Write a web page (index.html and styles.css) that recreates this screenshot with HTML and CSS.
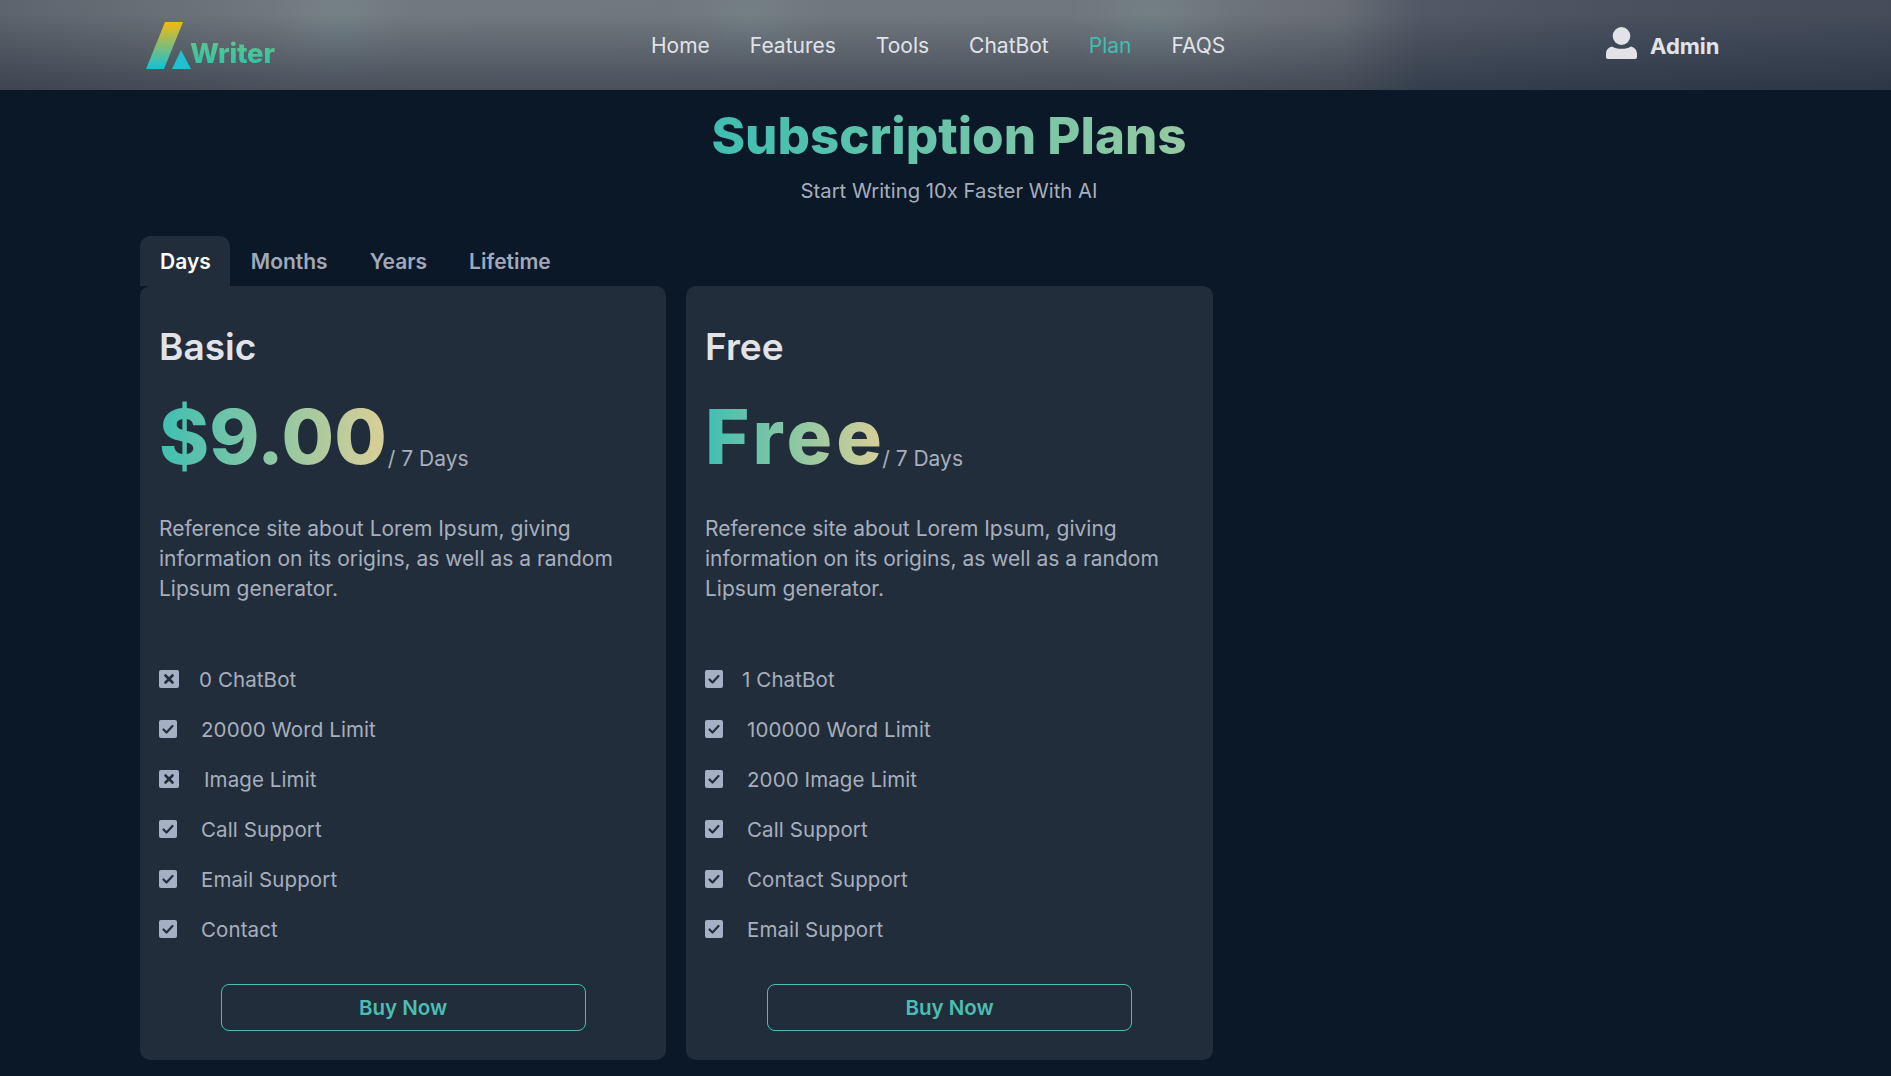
FILE: index.html
```html
<!DOCTYPE html>
<html lang="en">
<head>
  <meta charset="UTF-8" />
  <title>Writer - Subscription Plans</title>
  <link rel="stylesheet" href="styles.css">
</head>
<body>
  <header class="topbar">
    <a class="logo" href="#">
      <svg class="logo-mark" viewBox="0 0 46 48" width="46" height="48">
        <defs>
          <linearGradient id="logoGrad" x1="0" y1="0" x2="0" y2="1">
            <stop offset="0" stop-color="#f5b90f"/>
            <stop offset="1" stop-color="#12c2d6"/>
          </linearGradient>
        </defs>
        <polygon points="19,0 37,0 18,47 0,47" fill="url(#logoGrad)"/>
        <polygon points="35,28 45,47 26,47" fill="#1fc0cf"/>
      </svg>
      <span class="logo-text">Writer</span>
    </a>
    <nav class="main-nav">
      <a href="#">Home</a>
      <a href="#">Features</a>
      <a href="#">Tools</a>
      <a href="#">ChatBot</a>
      <a href="#" class="active">Plan</a>
      <a href="#">FAQS</a>
    </nav>
    <a class="user" href="#">
      <svg viewBox="0 0 31 32" width="31" height="32">
        <ellipse cx="15.5" cy="9" rx="8.8" ry="9" fill="#e2e3e8"/>
        <path d="M6 19.500c2.500 1.500 5.500 2.300 9.500 2.300s7-.8 9.500-2.300c3.500.8 6 3.500 6 7.500v3c0 1.200-.8 2-2 2H2c-1.200 0-2-.8-2-2v-3c0-4 2.500-6.700 6-7.500z" fill="#e2e3e8"/>
      </svg>
      <span>Admin</span>
    </a>
  </header>

  <main class="page">
    <h1 class="page-title"><span>Subscription Plans</span></h1>
    <p class="page-sub">Start Writing 10x Faster With AI</p>

    <div class="tabs">
      <a href="#" class="tab active">Days</a>
      <a href="#" class="tab">Months</a>
      <a href="#" class="tab">Years</a>
      <a href="#" class="tab">Lifetime</a>
    </div>

    <div class="plans">
      <section class="plan">
        <h2>Basic</h2>
        <div class="price"><span class="amount">$9.00</span><span class="period">/ 7 Days</span></div>
        <p class="desc">Reference site about Lorem Ipsum, giving information on its origins, as well as a random Lipsum generator.</p>
        <ul class="features">
          <li class="off">
            <svg class="box" viewBox="0 0 20 18"><rect width="20" height="18" rx="2" fill="#a6b0c4"/><path d="M6.500 5.500l7 7m0-7l-7 7" stroke="#222d3b" stroke-width="2.600" stroke-linecap="round"/></svg>
            <span class="t-zero">0 ChatBot</span>
          </li>
          <li><svg class="box" viewBox="0 0 18 18"><rect width="18" height="18" rx="2" fill="#a6b0c4"/><path d="M4.500 9.500l3 3 6-6.500" fill="none" stroke="#222d3b" stroke-width="2.200" stroke-linecap="round" stroke-linejoin="round"/></svg><span>20000 Word Limit</span></li>
          <li class="off">
            <svg class="box" viewBox="0 0 20 18"><rect width="20" height="18" rx="2" fill="#a6b0c4"/><path d="M6.500 5.500l7 7m0-7l-7 7" stroke="#222d3b" stroke-width="2.600" stroke-linecap="round"/></svg>
            <span class="t-image">Image Limit</span>
          </li>
          <li><svg class="box" viewBox="0 0 18 18"><rect width="18" height="18" rx="2" fill="#a6b0c4"/><path d="M4.500 9.500l3 3 6-6.500" fill="none" stroke="#222d3b" stroke-width="2.200" stroke-linecap="round" stroke-linejoin="round"/></svg><span>Call Support</span></li>
          <li><svg class="box" viewBox="0 0 18 18"><rect width="18" height="18" rx="2" fill="#a6b0c4"/><path d="M4.500 9.500l3 3 6-6.500" fill="none" stroke="#222d3b" stroke-width="2.200" stroke-linecap="round" stroke-linejoin="round"/></svg><span>Email Support</span></li>
          <li><svg class="box" viewBox="0 0 18 18"><rect width="18" height="18" rx="2" fill="#a6b0c4"/><path d="M4.500 9.500l3 3 6-6.500" fill="none" stroke="#222d3b" stroke-width="2.200" stroke-linecap="round" stroke-linejoin="round"/></svg><span>Contact</span></li>
        </ul>
        <a href="#" class="buy">Buy Now</a>
      </section>

      <section class="plan">
        <h2>Free</h2>
        <div class="price"><span class="amount amount-word">Free</span><span class="period">/ 7 Days</span></div>
        <p class="desc">Reference site about Lorem Ipsum, giving information on its origins, as well as a random Lipsum generator.</p>
        <ul class="features">
          <li><svg class="box" viewBox="0 0 18 18"><rect width="18" height="18" rx="2" fill="#a6b0c4"/><path d="M4.500 9.500l3 3 6-6.500" fill="none" stroke="#222d3b" stroke-width="2.200" stroke-linecap="round" stroke-linejoin="round"/></svg><span class="t-one">1 ChatBot</span></li>
          <li><svg class="box" viewBox="0 0 18 18"><rect width="18" height="18" rx="2" fill="#a6b0c4"/><path d="M4.500 9.500l3 3 6-6.500" fill="none" stroke="#222d3b" stroke-width="2.200" stroke-linecap="round" stroke-linejoin="round"/></svg><span>100000 Word Limit</span></li>
          <li><svg class="box" viewBox="0 0 18 18"><rect width="18" height="18" rx="2" fill="#a6b0c4"/><path d="M4.500 9.500l3 3 6-6.500" fill="none" stroke="#222d3b" stroke-width="2.200" stroke-linecap="round" stroke-linejoin="round"/></svg><span>2000 Image Limit</span></li>
          <li><svg class="box" viewBox="0 0 18 18"><rect width="18" height="18" rx="2" fill="#a6b0c4"/><path d="M4.500 9.500l3 3 6-6.500" fill="none" stroke="#222d3b" stroke-width="2.200" stroke-linecap="round" stroke-linejoin="round"/></svg><span>Call Support</span></li>
          <li><svg class="box" viewBox="0 0 18 18"><rect width="18" height="18" rx="2" fill="#a6b0c4"/><path d="M4.500 9.500l3 3 6-6.500" fill="none" stroke="#222d3b" stroke-width="2.200" stroke-linecap="round" stroke-linejoin="round"/></svg><span>Contact Support</span></li>
          <li><svg class="box" viewBox="0 0 18 18"><rect width="18" height="18" rx="2" fill="#a6b0c4"/><path d="M4.500 9.500l3 3 6-6.500" fill="none" stroke="#222d3b" stroke-width="2.200" stroke-linecap="round" stroke-linejoin="round"/></svg><span>Email Support</span></li>
        </ul>
        <a href="#" class="buy">Buy Now</a>
      </section>
    </div>
  </main>
</body>
</html>
```

FILE: styles.css
```css
* {
  box-sizing: border-box;
}

body {
  margin: 0;
  font-family: Inter, "Open Sans", sans-serif;
  background-color: #0b1828;
  color: #a7afbd;
  overflow: hidden;
}

a {
  text-decoration: none;
}

.topbar {
  height: 90px;
  display: grid;
  grid-template-columns: 505px 955px auto;
  align-items: center;
  padding-left: 146px;
  background:
    linear-gradient(to bottom, rgba(11, 24, 40, 0) 15%, rgba(11, 24, 40, 0.42) 100%),
    radial-gradient(ellipse 70px 70px at 340px 20px, rgba(120, 145, 150, 0.35), transparent),
    radial-gradient(ellipse 80px 70px at 750px 20px, rgba(120, 145, 150, 0.3), transparent),
    radial-gradient(ellipse 80px 70px at 1150px 20px, rgba(120, 145, 150, 0.35), transparent),
    linear-gradient(to right, #5e646d 0, #737980 300px, #70767d 1200px, #686d75 1340px, #525966 1420px, #4a5260 1600px, #444c5a 1891px);
}

.logo {
  display: flex;
  align-items: flex-end;
  height: 48px;
  margin-top: 2px;
}

.logo-mark {
  flex: none;
}

.logo-text {
  font-size: 27.500px;
  font-weight: 800;
  line-height: 26px;
  margin-left: -2px;
  letter-spacing: -0.2px;
  background: linear-gradient(to bottom, #5fc58a, #2ec4a8);
  -webkit-background-clip: text;
  background-clip: text;
  color: transparent;
  transform: translateY(-4px);
}

.main-nav {
  display: flex;
  gap: 40px;
}

.main-nav a {
  color: #e2e3e8;
  font-size: 21px;
}

.main-nav a.active {
  color: #43bdb0;
}

.user {
  display: flex;
  align-items: center;
  gap: 13px;
  color: #e2e3e8;
  font-size: 22px;
  font-weight: 700;
}

.user svg {
  margin-bottom: 5px;
}

.user span {
  margin-top: 2px;
}

.page {
  width: 1618px;
  margin-left: 140px;
  padding-top: 14px;
}

.page-title {
  margin: 0;
  text-align: center;
  font-size: 51px;
  line-height: 64px;
  font-weight: 800;
}

.page-title span {
  background: linear-gradient(to right, #3fbfb1, #96c9a2);
  -webkit-background-clip: text;
  background-clip: text;
  color: transparent;
}

.page-sub {
  margin: 8px 0 0;
  text-align: center;
  font-size: 20.300px;
  line-height: 30px;
}

.tabs {
  display: flex;
  margin-top: 30px;
  height: 50px;
}

.tab {
  padding: 0 21px;
  line-height: 52px;
  font-size: 21px;
  font-weight: 600;
  color: #a1a9b9;
}

.tab.active {
  padding: 0 19px 0 20px;
  background: #222d3b;
  color: #fff;
  border-radius: 10px 10px 0 0;
}

.plans {
  display: grid;
  grid-template-columns: 526px 527px;
  gap: 20px;
}

.plan {
  height: 774px;
  padding: 37px 19px 0;
  background: #222d3b;
  border-radius: 10px;
}

.plan h2 {
  margin: 0;
  font-size: 37px;
  line-height: 48px;
  font-weight: 600;
  color: #e2e3e8;
}

.price {
  display: flex;
  align-items: flex-end;
  margin-top: 15px;
}

.amount {
  font-size: 76px;
  line-height: 100px;
  font-weight: 800;
  background: linear-gradient(to right, #3fbfb1, #dccf96);
  -webkit-background-clip: text;
  background-clip: text;
  color: transparent;
}

.amount-word {
  letter-spacing: 4.200px;
  margin-right: -5px;
}

.period {
  font-size: 21px;
  line-height: 30px;
  margin: 0 0 12px 1px;
}

.desc {
  margin: 28px 0 0;
  font-size: 21px;
  line-height: 30px;
}

.features {
  list-style: none;
  margin: 50px 0 0;
  padding: 0;
  font-size: 20.500px;
  letter-spacing: 0.1px;
}

.features li {
  display: flex;
  align-items: center;
  height: 50px;
}

.box {
  width: 18px;
  height: 18px;
  flex: none;
  margin-right: 24px;
}

.off .box {
  width: 20px;
  margin-right: 20px;
}

.off .t-image {
  margin-left: 5px;
}

.t-one {
  margin-left: -5px;
}

.buy {
  display: block;
  width: 365px;
  height: 47px;
  margin: 30px auto 0;
  border: 1px solid #4dbdb2;
  border-radius: 8px;
  text-align: center;
  line-height: 45px;
  font-size: 20.500px;
  font-weight: 600;
  color: #4dbdb2;
}
```
